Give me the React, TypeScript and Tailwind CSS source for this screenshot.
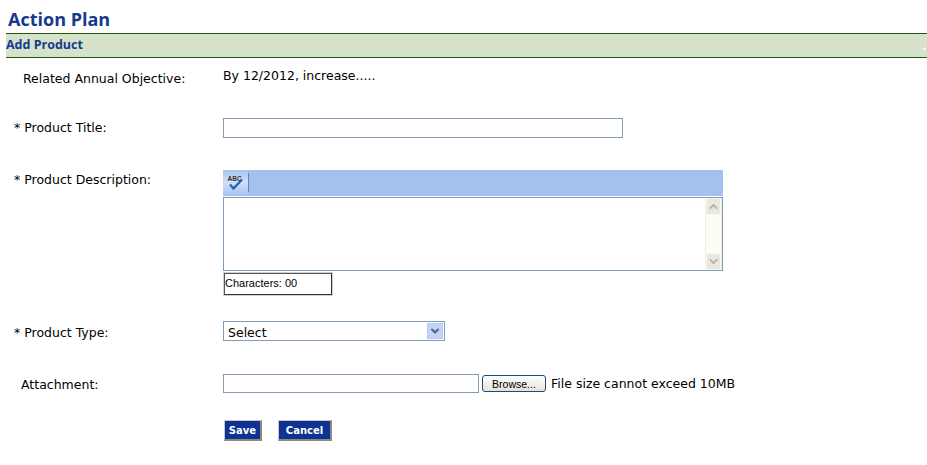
import { ChevronDown, ChevronUp } from "lucide-react";

const font = "font-['DejaVu_Sans',Verdana,sans-serif]";
const arial = "font-['Liberation_Sans',Arial,sans-serif]";
const fieldBorder = "border border-[#7f9db9]";
const blueButton = "h-[21px] bg-[#0f3393] border-r-2 border-b-2 border-r-[#8c8a7c] border-b-[#8c8a7c] border-t border-l border-t-[#c9c7bc] border-l-[#c9c7bc] text-white text-[10px] leading-[17px] font-bold";

function SpellIcon() {
    return (
        <svg width="25" height="25" viewBox="0 0 25 25">
            <defs>
                <linearGradient id="spell" x1="0" y1="0" x2="0" y2="1">
                    <stop offset="0" stopColor="#a9c4ef" />
                    <stop offset="0.5" stopColor="#cfe0f8" />
                    <stop offset="1" stopColor="#a9c4ef" />
                </linearGradient>
            </defs>
            <rect width="25" height="25" fill="url(#spell)" />
            <text x="4.5" y="11" fontSize="6.5" fontWeight="700" fill="#333" fontFamily="Liberation Sans">ABC</text>
            <path d="M7 14.5l3.5 4 8.5-9" fill="none" stroke="#2b62b8" strokeWidth="2.4" />
        </svg>
    );
}

export default function App() {
    return (
        <div className={`${font} w-[927px] h-[465px] bg-white text-[12.5px] text-black overflow-hidden`}>
            <h1 className="pl-2 pt-[7px] h-[33px] text-[18px] leading-[24px] font-bold text-[#15398f] font-['Open_Sans',sans-serif]">Action Plan</h1>

            {/* Section bar */}
            <div className="relative ml-[6px] h-[25px] border-y border-[#1f5a10] bg-[#d6e3ca] text-[12.5px] leading-[22px] font-bold text-[#15398f] font-['Open_Sans',sans-serif]">
                Add Product
                <span className="absolute right-[1px] top-[14px] w-[3px] h-[2px] bg-[#d8ffff]" />
            </div>

            {/* Objective */}
            <div className="flex h-[43px] pt-[10px]">
                <div className="w-[223px] pl-[23px] leading-[22px]">Related Annual Objective:</div>
                <div className="leading-[16px]">By 12/2012, increase.....</div>
            </div>

            {/* Title */}
            <div className="flex items-center h-[20px] mt-[17px]">
                <div className="w-[223px] pl-[14px]">* Product Title:</div>
                <input className={`w-[400px] h-[20px] ${fieldBorder} bg-white`} />
            </div>

            {/* Description */}
            <div className="flex mt-[32px]">
                <div className="w-[223px] pl-[14px] leading-[20px]">* Product Description:</div>
                <div className="w-[500px]">
                    <div className="h-[26px] bg-[#a3c0ee] flex">
                        <SpellIcon />
                        <span className="w-px h-[19px] bg-[#5f86b8] mt-[3px]" />
                    </div>
                    <div className={`mt-[1px] h-[74px] ${fieldBorder} flex justify-end bg-white`}>
                        <div className="w-[17px] h-full bg-[#fdfdf6] flex flex-col justify-between border-x border-[#f0efe6]">
                            <div className="h-[17px] flex items-center justify-center bg-[#e9e8df] border border-[#f8f8f2]">
                                <ChevronUp size={13} strokeWidth={3.5} color="#b5b5ab" />
                            </div>
                            <div className="h-[17px] flex items-center justify-center bg-[#e9e8df] border border-[#f8f8f2]">
                                <ChevronDown size={13} strokeWidth={3.5} color="#b5b5ab" />
                            </div>
                        </div>
                    </div>
                    <div className={`${arial} mt-[2px] ml-px w-[108px] h-[22px] border border-t-[#555] border-l-[#555] border-r-[#333] border-b-[#333] outline outline-1 outline-[#d4d0c8] text-[11px] leading-[19px]`}>Characters: 00</div>
                </div>
            </div>

            {/* Type */}
            <div className="flex h-[21px] mt-[26px]">
                <div className="w-[223px] pl-[14px] leading-[24px]">* Product Type:</div>
                <div className={`w-[222px] h-[20px] ${fieldBorder} flex items-center justify-between pl-[4px] pr-px bg-white`}>
                    <span className="leading-[18px] pt-[3px]">Select</span>
                    <span className="w-[16px] h-[16px] bg-[#c3d4f6] border border-[#b4c8f0] flex items-center justify-center">
                        <ChevronDown size={12} strokeWidth={4} color="#4d6185" />
                    </span>
                </div>
            </div>

            {/* Attachment */}
            <div className="flex h-[20px] mt-[32px]">
                <div className="w-[223px] pl-[21px] leading-[22px]">Attachment:</div>
                <input className={`w-[256px] h-[19px] ${fieldBorder} bg-white`} />
                <button className={`${arial} ml-[3px] mt-px w-[64px] h-[17px] rounded-[3px] border border-[#1f4a80] bg-gradient-to-b from-white to-[#e6e3d8] text-[10.5px] leading-[17px] text-black`}>Browse...</button>
                <span className="ml-[5px] leading-[20px]">File size cannot exceed 10MB</span>
            </div>

            {/* Buttons */}
            <div className="flex gap-[16px] ml-[224px] mt-[26px]">
                <button className={`${blueButton} w-[38px]`}>Save</button>
                <button className={`${blueButton} w-[54px]`}>Cancel</button>
            </div>
        </div>
    );
}
